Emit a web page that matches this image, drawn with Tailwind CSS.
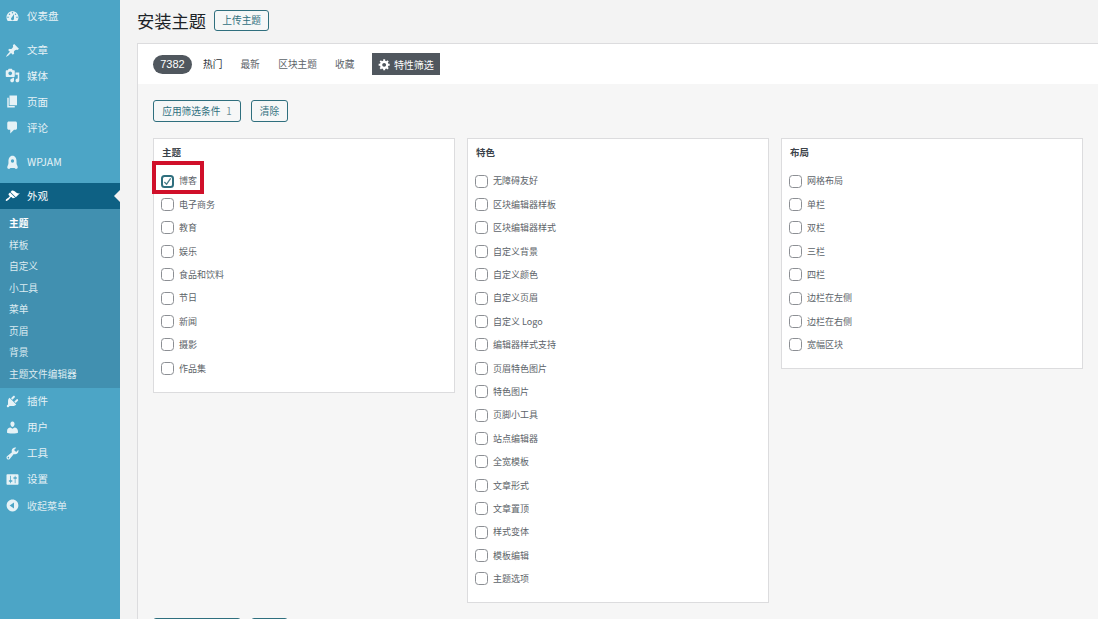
<!DOCTYPE html>
<html lang="zh-CN">
<head>
    <meta charset="UTF-8">
    <title>安装主题</title>
    <script src="https://cdn.jsdelivr.net/npm/@tailwindcss/browser@4"></script>
</head>
<body class="h-[619px] w-[1098px] overflow-hidden flex bg-[#f3f3f3] font-['Noto_Sans_CJK_SC','Noto_Sans',sans-serif]">

<!-- admin menu -->
<nav class="w-[120px] h-full shrink-0 bg-[#4ca5c6] pt-[3px] text-[10.5px] text-[#e6f2f6]">
    <a class="h-[26px] flex items-center pl-[5px] gap-[7px]">
        <svg class="w-[15px] h-[15px] fill-[#e6f2f6]" viewBox="0 0 20 20"><path fill-rule="evenodd" d="M3.76 16h12.48c1.1-1.37 1.76-3.11 1.76-5 0-4.42-3.58-8-8-8s-8 3.58-8 8c0 1.89.66 3.63 1.76 5zM10 4c.55 0 1 .45 1 1s-.45 1-1 1-1-.45-1-1 .45-1 1-1zM6 6c.55 0 1 .45 1 1s-.45 1-1 1-1-.45-1-1 .45-1 1-1zm8 0c.55 0 1 .45 1 1s-.45 1-1 1-1-.45-1-1 .45-1 1-1zm-5.37 5.55L12 7v6c0 1.1-.9 2-2 2s-2-.9-2-2c0-.57.24-1.08.63-1.45zM4 10c.55 0 1 .45 1 1s-.45 1-1 1-1-.45-1-1 .45-1 1-1zm12 0c.55 0 1 .45 1 1s-.45 1-1 1-1-.45-1-1 .45-1 1-1z"/></svg>
        <span>仪表盘</span>
    </a>
    <a class="h-[26px] mt-[8px] flex items-center pl-[5px] gap-[7px]">
        <svg class="w-[15px] h-[15px] fill-[#e6f2f6]" viewBox="0 0 20 20"><path d="M10.44 3.02l1.82-1.82 6.36 6.35-1.83 1.82c-1.05-.68-2.48-.57-3.41.36l-.75.75c-.92.93-1.04 2.35-.35 3.41l-1.83 1.82-2.41-2.41-2.8 2.79c-.42.42-3.38 2.71-3.8 2.29s1.86-3.39 2.28-3.81l2.79-2.79L4.1 9.36l1.83-1.82c1.05.69 2.48.57 3.4-.36l.75-.75c.93-.92 1.05-2.35.36-3.41z"/></svg>
        <span>文章</span>
    </a>
    <a class="h-[26px] -mt-[.5px] flex items-center pl-[5px] gap-[7px]">
        <svg class="w-[15px] h-[15px] fill-[#e6f2f6]" viewBox="0 0 20 20"><path fill-rule="evenodd" d="M13 11V4c0-.55-.45-1-1-1h-1.67L9 1H5L3.67 3H2c-.55 0-1 .45-1 1v7c0 .55.45 1 1 1h10c.55 0 1-.45 1-1zM7 4.5c1.38 0 2.5 1.12 2.5 2.5S8.38 9.5 7 9.5 4.5 8.38 4.5 7 5.62 4.5 7 4.5zM14 6h5v10.5c0 1.38-1.12 2.5-2.5 2.5S14 17.88 14 16.5s1.12-2.5 2.5-2.5c.17 0 .34.02.5.05V9h-3V6zm-4 8.05V13h2v3.5c0 1.38-1.12 2.5-2.5 2.5S7 17.88 7 16.5 8.12 14 9.5 14c.17 0 .34.02.5.05z"/></svg>
        <span>媒体</span>
    </a>
    <a class="h-[26px] flex items-center pl-[5px] gap-[7px]">
        <svg class="w-[15px] h-[15px] fill-[#e6f2f6]" viewBox="0 0 20 20"><path d="M6 15V2h10v13H6zm-1 1h8v2H3V5h2v11z"/></svg>
        <span>页面</span>
    </a>
    <a class="h-[26px] flex items-center pl-[5px] gap-[7px]">
        <svg class="w-[15px] h-[15px] fill-[#e6f2f6]" viewBox="0 0 20 20"><path d="M5 2h9c1.1 0 2 .9 2 2v7c0 1.1-.9 2-2 2h-2l-5 5v-5H5c-1.1 0-2-.9-2-2V4c0-1.1.9-2 2-2z"/></svg>
        <span>评论</span>
    </a>
    <a class="h-[26px] mt-[8.5px] flex items-center pl-[5px] gap-[7px]">
        <svg class="w-[15px] h-[15px] fill-[#e6f2f6]" viewBox="0 0 20 20"><path fill-rule="evenodd" d="M10 1C6.400 1 4.600 4.400 4.600 8.500c0 1.700.2 3.200-.6 4.700-.6 1.100-1 2-1 3.100 0 1.500 1.100 2.200 2.400 2.200.9 0 1.400-.5 1.900-1.100h5.400c.5.6 1 1.100 1.900 1.100 1.300 0 2.400-.7 2.400-2.200 0-1.100-.4-2-1-3.100-.8-1.500-.6-3-.6-4.700C15.400 4.400 13.600 1 10 1zm0 4.800a2.200 2.200 0 1 1 0 4.400 2.200 2.200 0 0 1 0-4.400z"/></svg>
        <span>WPJAM</span>
    </a>

    <a class="relative h-[26px] mt-[8px] flex items-center pl-[5px] gap-[7px] bg-[#0e6184] text-white">
        <svg class="w-[15px] h-[15px] fill-white" viewBox="0 0 20 20"><path d="M14.48 11.06L7.41 3.99l1.5-1.5c.5-.56 2.3-.47 3.51.32 1.21.8 1.43 1.28 2.91 2.1 1.18.64 2.45 1.26 4.45.85zm-.71.71L6.7 4.7 4.93 6.47c-.39.39-.39 1.02 0 1.41l1.06 1.06c.39.39.39 1.03 0 1.42-.6.6-1.43 1.11-2.21 1.69-.35.26-.7.53-1.01.84C1.43 13.23.4 14.84 1.21 15.65c.82.81 2.43-.22 3.78-1.57.31-.31.58-.66.84-1.01.58-.78 1.09-1.61 1.69-2.21.39-.39 1.02-.39 1.41 0l1.06 1.06c.39.39 1.02.39 1.41 0z"/></svg>
        <span>外观</span>
        <i class="absolute right-0 top-[7px] border-y-[6px] border-y-transparent border-r-[6px] border-r-[#f3f3f3]"></i>
    </a>
    <ul class="bg-[#4190b0] pt-[4px] pb-[3px] pl-[9px] text-[9.7px] text-[#dcebf1]">
        <li class="h-[21.5px] flex items-center font-bold text-white">主题</li>
        <li class="h-[21.5px] flex items-center">样板</li>
        <li class="h-[21.5px] flex items-center">自定义</li>
        <li class="h-[21.5px] flex items-center">小工具</li>
        <li class="h-[21.5px] flex items-center">菜单</li>
        <li class="h-[21.5px] flex items-center">页眉</li>
        <li class="h-[21.5px] flex items-center">背景</li>
        <li class="h-[21.5px] flex items-center">主题文件编辑器</li>
    </ul>

    <a class="h-[26px] flex items-center pl-[5px] gap-[7px]">
        <svg class="w-[15px] h-[15px] fill-[#e6f2f6]" viewBox="0 0 20 20"><path d="M13.11 4.36L9.87 7.6 8 5.73l3.24-3.24c.35-.34 1.05-.2 1.56.32.52.51.66 1.21.31 1.55zm-8 1.770l.91-1.120 9.010 9.010-1.190.84c-.71.71-2.630 1.160-3.820 1.160H6.140L4.900 17.260c-.59.59-1.540.59-2.120 0-.59-.58-.59-1.530 0-2.120l1.240-1.240v-3.880c0-1.130.4-3.190 1.090-3.890zm7.260 3.970l3.240-3.240c.34-.35 1.040-.21 1.550.31.52.51.66 1.210.31 1.550l-3.240 3.250z"/></svg>
        <span>插件</span>
    </a>
    <a class="h-[26px] flex items-center pl-[5px] gap-[7px]">
        <svg class="w-[15px] h-[15px] fill-[#e6f2f6]" viewBox="0 0 20 20"><path d="M10 9.250c-2.270 0-2.730-3.440-2.730-3.440C7 4.020 7.820 2 9.970 2c2.160 0 2.980 2.020 2.710 3.810 0 0-.41 3.440-2.680 3.440zm0 2.570L12.720 10c2.390 0 4.520 2.330 4.520 4.530v2.490s-3.650 1.130-7.240 1.130c-3.650 0-7.240-1.130-7.240-1.130v-2.490c0-2.250 1.940-4.480 4.470-4.480z"/></svg>
        <span>用户</span>
    </a>
    <a class="h-[26px] flex items-center pl-[5px] gap-[7px]">
        <svg class="w-[15px] h-[15px] fill-[#e6f2f6]" viewBox="0 0 20 20"><path fill-rule="evenodd" d="M16.680 9.770c-1.340 1.340-3.300 1.670-4.950.99l-5.410 6.520c-.99.99-2.590.99-3.580 0s-.99-2.590 0-3.570l6.520-5.420c-.68-1.650-.35-3.610.99-4.950 1.280-1.280 3.120-1.620 4.720-1.060l-2.890 2.890 2.820 2.820 2.860-2.870c.53 1.580.18 3.390-1.080 4.650zM3.810 16.210c.4.39 1.040.39 1.430 0 .4-.4.4-1.040 0-1.430-.39-.4-1.030-.4-1.430 0-.39.39-.39 1.030 0 1.430z"/></svg>
        <span>工具</span>
    </a>
    <a class="h-[26px] flex items-center pl-[5px] gap-[7px]">
        <svg class="w-[15px] h-[15px] fill-[#e6f2f6]" viewBox="0 0 20 20"><path fill-rule="evenodd" d="M18 16V4c0-.55-.45-1-1-1H3c-.55 0-1 .45-1 1v12c0 .55.45 1 1 1h14c.55 0 1-.45 1-1zM8 11h1c.55 0 1 .45 1 1s-.45 1-1 1H8v1.500c0 .28-.22.5-.5.5s-.5-.22-.5-.5V13H6c-.55 0-1-.45-1-1s.45-1 1-1h1V5.500c0-.28.22-.5.5-.5s.5.22.5.5V11zm5-2h-1c-.55 0-1-.45-1-1s.45-1 1-1h1V5.500c0-.28.22-.5.5-.5s.5.22.5.5V7h1c.55 0 1 .45 1 1s-.45 1-1 1h-1v5.500c0 .28-.22.5-.5.5s-.5-.22-.5-.5V9z"/></svg>
        <span>设置</span>
    </a>
    <a class="h-[26px] flex items-center pl-[5px] gap-[7px] text-[#dcebf1]">
        <svg class="w-[15px] h-[15px] fill-[#e6f2f6]" viewBox="0 0 20 20"><path fill-rule="evenodd" d="M10 2.160c4.330 0 7.840 3.510 7.840 7.840s-3.510 7.840-7.840 7.840S2.160 14.330 2.160 10 5.710 2.160 10 2.160zm2 11.720V6.120L6.180 9.970z"/></svg>
        <span class="text-[10px]">收起菜单</span>
    </a>
</nav>

<!-- page content -->
<main class="flex-1 min-w-0 pl-[17px]">
    <div class="h-[43px] pt-[10px] flex items-start">
        <h1 class="text-[17.3px] leading-[21px] text-[#1d2327]">安装主题</h1>
        <button class="ml-[8px] h-[21px] w-[55px] border border-[#2f6f7e] rounded-[3px] bg-[#f6f7f7] text-[9.7px] text-[#2f6f7e]">上传主题</button>
    </div>

    <div class="border border-r-0 border-[#dcdcde] bg-[#f6f6f6] h-[600px]">
        <div class="h-[40px] bg-white flex items-center pl-[15px] text-[9.7px] text-[#5c6369]">
            <span class="w-[39px] h-[19px] rounded-full bg-[#50575e] text-white font-['Liberation_Sans'] text-[11px] flex items-center justify-center">7382</span>
            <a class="ml-[11px] text-[#2c3338]">热门</a>
            <a class="ml-[18px]">最新</a>
            <a class="ml-[18.5px]">区块主题</a>
            <a class="ml-[18px]">收藏</a>
            <button class="ml-[17.5px] w-[68px] h-[22px] bg-[#50575e] text-white flex items-center justify-center gap-[3px] text-[10px]">
                <svg class="w-[13px] h-[13px] fill-white" viewBox="0 0 20 20"><path fill-rule="evenodd" d="M18 12h-2.180c-.17.7-.44 1.350-.81 1.930l1.540 1.540-2.100 2.100-1.540-1.540c-.58.36-1.230.63-1.910.79V19H8v-2.180c-.68-.16-1.330-.43-1.910-.79l-1.540 1.540-2.120-2.120 1.540-1.540c-.36-.58-.63-1.230-.79-1.910H1V9.030h2.170c.16-.7.44-1.350.8-1.940L2.430 5.550l2.100-2.100 1.540 1.540c.58-.37 1.240-.64 1.930-.81V2h3v2.180c.68.16 1.330.43 1.910.79l1.540-1.540 2.120 2.120-1.540 1.540c.36.59.64 1.240.8 1.940H18V12zm-8.500 1.500c1.660 0 3-1.340 3-3s-1.340-3-3-3-3 1.340-3 3 1.340 3 3 3z"/></svg>
                特性筛选
            </button>
        </div>

        <div class="pl-[15px] pt-[16px]">
            <div class="flex gap-[10px]">
                <button class="w-[88px] h-[22px] border border-[#2f6f7e] rounded-[3px] bg-[#f6f7f7] text-[9.7px] text-[#2f6f7e]">应用筛选条件<span class="ml-[6px] text-[#6f8f98]">1</span></button>
                <button class="w-[37px] h-[22px] border border-[#2f6f7e] rounded-[3px] bg-[#f6f7f7] text-[9.7px] text-[#2f6f7e]">清除</button>
            </div>

            <div id="groups" class="mt-[16px] grid grid-cols-[302px_302px_302px] gap-[12px] items-start"></div>

            <div class="mt-[15px] flex gap-[10px]">
                <button class="w-[88px] h-[22px] border border-[#2f6f7e] rounded-[3px] bg-[#f6f7f7]"></button>
                <button class="w-[37px] h-[22px] border border-[#2f6f7e] rounded-[3px] bg-[#f6f7f7]"></button>
            </div>
        </div>
    </div>
</main>

<script>
    // filter groups, first item of the first group is the ticked one
    const groups = [
        ['主题', ['博客', '电子商务', '教育', '娱乐', '食品和饮料', '节日', '新闻', '摄影', '作品集']],
        ['特色', ['无障碍友好', '区块编辑器样板', '区块编辑器样式', '自定义背景', '自定义颜色', '自定义页眉', '自定义 Logo', '编辑器样式支持', '页眉特色图片', '特色图片', '页脚小工具', '站点编辑器', '全宽模板', '文章形式', '文章置顶', '样式变体', '模板编辑', '主题选项']],
        ['布局', ['网格布局', '单栏', '双栏', '三栏', '四栏', '边栏在左侧', '边栏在右侧', '宽幅区块']]
    ];

    const box = 'w-[13px] h-[13px] shrink-0 rounded-[3.5px] border border-[#8c8f94] bg-white';
    const ticked = 'relative w-[13px] h-[13px] shrink-0 rounded-[3.5px] border-2 border-[#2f6f7e] bg-white flex items-center justify-center';
    const tick = '<svg class="w-[9px] h-[9px]" viewBox="0 0 10 10"><path d="M1.500 5.500L4 8l4.500-6.500" fill="none" stroke="#4b7f8b" stroke-width="1.400"/></svg>';
    const redBox = '<i class="absolute left-[-9px] top-[-9px] w-[52px] h-[33px] border-4 border-[#d0102a]"></i>';

    document.getElementById('groups').innerHTML = groups.map(([title, items], g) => `
        <section class="border border-[#dcdcde] bg-white pl-[7px] pt-[6px] pb-[11.500px]">
            <h4 class="h-[14px] pl-[1px] leading-[14px] text-[9.500px] font-bold text-[#3c434a]">${title}</h4>
            <div class="mt-[10.500px]">
                ${items.map((name, i) => `
                    <label class="relative h-[23.400px] flex items-center gap-[5px] text-[9px] text-[#5c6369]">
                        ${g === 0 && i === 0 ? `<span class="${ticked}">${tick}</span>${redBox}` : `<span class="${box}"></span>`}
                        ${name}
                    </label>`).join('')}
            </div>
        </section>`).join('');
</script>
</body>
</html>
